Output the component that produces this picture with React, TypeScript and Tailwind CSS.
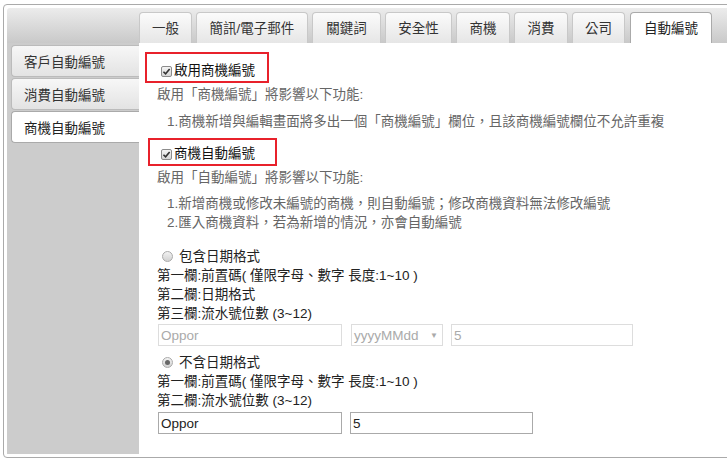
import React from "react";

const tabs = [
  { label: "一般", w: "w-[53px]" },
  { label: "簡訊/電子郵件", w: "w-[112px]" },
  { label: "關鍵詞", w: "w-[69px]" },
  { label: "安全性", w: "w-[67px]" },
  { label: "商機", w: "w-[54px]" },
  { label: "消費", w: "w-[54px]" },
  { label: "公司", w: "w-[53px]" },
  { label: "自動編號", w: "w-[82px]", active: true },
];

const sideItems = [
  { label: "客戶自動編號" },
  { label: "消費自動編號" },
  { label: "商機自動編號", active: true },
];

function Check() {
  return (
    <span className="flex h-[11px] w-[11px] shrink-0 items-center justify-center rounded-[2px] border border-[#8c8c8c] bg-gradient-to-b from-[#f5f5f5] to-[#d6d6d6]">
      <svg viewBox="0 0 10 10" className="h-[9px] w-[9px]">
        <path d="M1.6 5.3 L4 7.6 L8.5 2.2" fill="none" stroke="#333" strokeWidth="1.8" />
      </svg>
    </span>
  );
}

function Radio({ checked }: { checked?: boolean }) {
  return (
    <span className="flex h-[11px] w-[11px] shrink-0 items-center justify-center rounded-full border border-[#aaa] bg-gradient-to-b from-[#f2f2f2] to-[#d2d2d2]">
      {checked && <span className="h-[5px] w-[5px] rounded-full bg-[#666]" />}
    </span>
  );
}

function Field({ value, width, disabled }: { value: string; width: string; disabled?: boolean }) {
  return (
    <div
      className={
        disabled
          ? `flex h-[22px] items-center border border-[#ddd] pl-[2px] text-[#aaa] ${width}`
          : `flex h-[22px] items-center border border-[#aaa] pl-[2px] text-[#222] ${width}`
      }
    >
      {value}
    </div>
  );
}

export default function App() {
  return (
    <div className="h-[472px] w-[727px] overflow-hidden bg-white font-['Liberation_Sans','Noto_Sans_CJK_TC',sans-serif] text-[13.5px] leading-[19px]">
      <div className="ml-[3px] mt-[4px] flex h-[454px] w-[740px] flex-col rounded-[4px] border border-[#aaa] p-[3px]">
        {/* tab bar */}
        <div className="flex h-[35px] shrink-0 items-end gap-[4px] rounded-t-[3px] bg-gradient-to-b from-[#ececec] to-[#c9c9c9] pl-[132px]">
          {tabs.map((t) =>
            t.active ? (
              <div
                key={t.label}
                className={`ml-[1px] flex h-[31px] items-center justify-center rounded-t-[4px] border border-b-0 border-[#aaa] bg-white pt-[1px] text-[#222] ${t.w}`}
              >
                {t.label}
              </div>
            ) : (
              <div
                key={t.label}
                className={`flex h-[31px] items-center justify-center rounded-t-[4px] border border-b-0 border-[#c8c8c8] bg-gradient-to-b from-[#fbfbfb] to-[#e6e6e6] pt-[1px] text-[#333] ${t.w}`}
              >
                {t.label}
              </div>
            )
          )}
        </div>

        <div className="flex flex-1">
          {/* side menu */}
          <div className="flex w-[132px] shrink-0 flex-col gap-[1px] bg-[#ccc] pl-[4px] pt-[2px]">
            {sideItems.map((s) => (
              <div
                key={s.label}
                className={
                  s.active
                    ? "flex h-[32px] items-center rounded-l-[4px] border border-r-0 border-[#aaa] bg-white pl-[12px] pt-[2px] text-[#222]"
                    : "flex h-[32px] items-center rounded-l-[4px] border border-r-0 border-[#bbb] bg-gradient-to-b from-[#f7f7f7] to-[#e3e3e3] pl-[12px] pt-[2px] text-[#333]"
                }
              >
                {s.label}
              </div>
            ))}
          </div>

          {/* content */}
          <div className="flex flex-1 flex-col bg-white pl-[18px] pt-[9px]">
            <div className="-ml-[12px] flex w-[124px] items-center gap-[2px] border-2 border-[#e8212b] pb-[2px] pl-[14px] pt-[9px] leading-[16px] text-[#111]">
              <Check />
              <span>啟用商機編號</span>
            </div>
            <div className="mt-[2px] text-[#666]">啟用「商機編號」將影響以下功能:</div>
            <div className="mt-[8px] pl-[10px] text-[#666]">
              1.商機新增與編輯畫面將多出一個「商機編號」欄位，且該商機編號欄位不允許重複
            </div>

            <div className="-ml-[9px] mt-[7px] flex w-[129px] items-center gap-[2px] border-2 border-[#e8212b] pb-[2px] pl-[11px] pt-[6px] leading-[16px] text-[#111]">
              <Check />
              <span>商機自動編號</span>
            </div>
            <div className="mt-[2px] text-[#666]">啟用「自動編號」將影響以下功能:</div>
            <div className="mt-[7px] pl-[10px] text-[#666]">
              <div>1.新增商機或修改未編號的商機，則自動編號；修改商機資料無法修改編號</div>
              <div>2.匯入商機資料，若為新增的情況，亦會自動編號</div>
            </div>

            <div className="mt-[14px] flex h-[20px] items-center gap-[6px] pl-[5px] text-[#222]">
              <Radio />
              <span>包含日期格式</span>
            </div>
            <div className="text-[#222]">第一欄:前置碼( 僅限字母、數字 長度:1~10 )</div>
            <div className="text-[#222]">第二欄:日期格式</div>
            <div className="text-[#222]">第三欄:流水號位數 (3~12)</div>
            <div className="ml-[1px] mt-[1px] flex gap-[8px]">
              <Field value="Oppor" width="w-[184px]" disabled />
              <div className="ml-[1px] flex h-[22px] w-[92px] items-center justify-between border border-[#ddd] pl-[2px] pr-[4px] text-[#aaa]">
                <span>yyyyMMdd</span>
                <span className="text-[8px]">▼</span>
              </div>
              <Field value="5" width="w-[182px]" disabled />
            </div>

            <div className="mt-[6px] flex h-[20px] items-center gap-[6px] pl-[5px] text-[#222]">
              <Radio checked />
              <span>不含日期格式</span>
            </div>
            <div className="text-[#222]">第一欄:前置碼( 僅限字母、數字 長度:1~10 )</div>
            <div className="text-[#222]">第二欄:流水號位數 (3~12)</div>
            <div className="ml-[1px] mt-[2px] flex gap-[8px]">
              <Field value="Oppor" width="w-[184px]" />
              <Field value="5" width="w-[183px]" />
            </div>
          </div>
        </div>
      </div>
    </div>
  );
}
